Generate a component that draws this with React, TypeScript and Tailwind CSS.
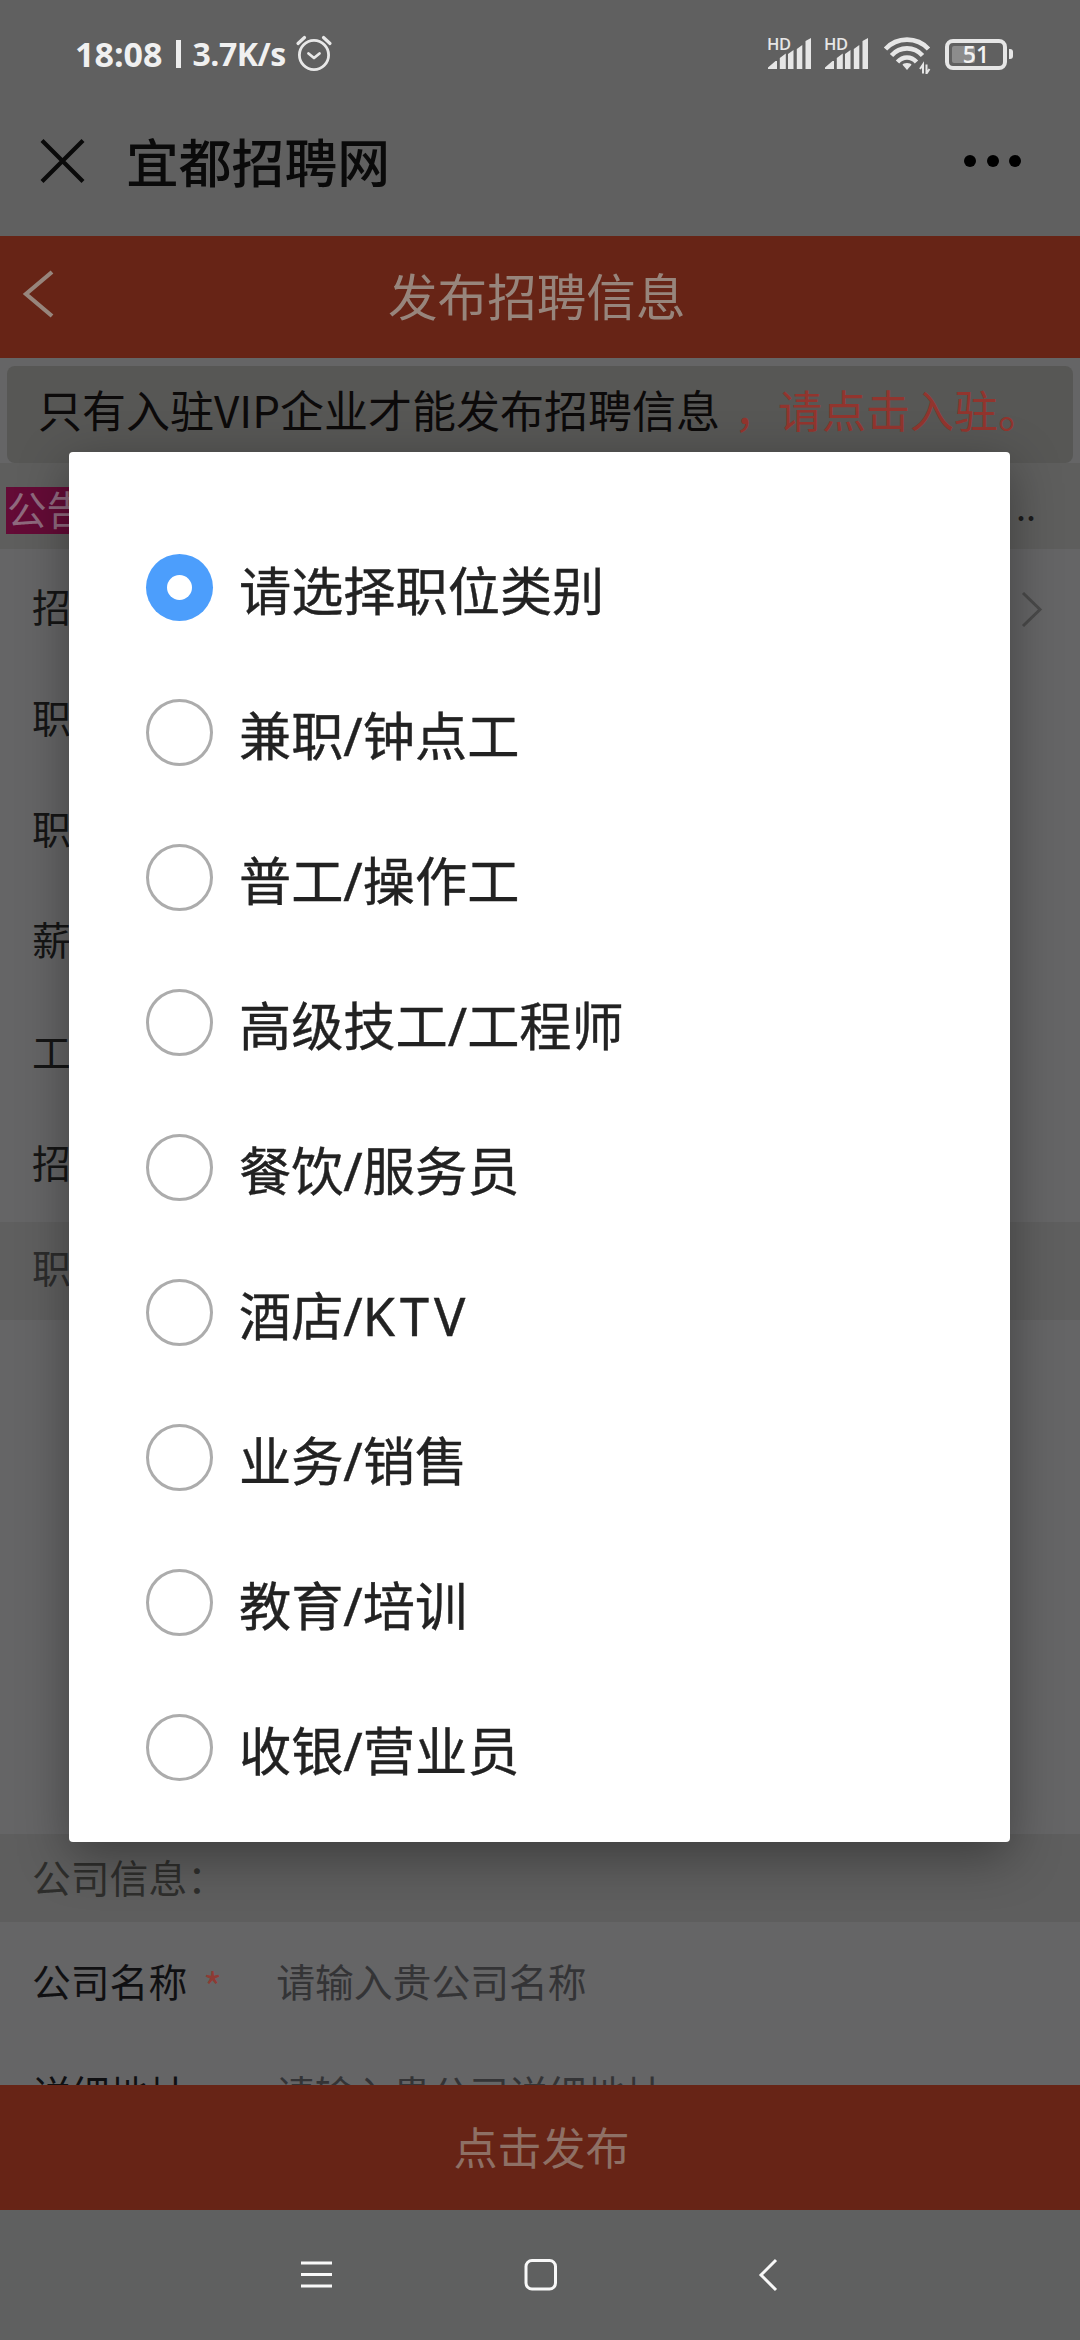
import React from "react";

const options = [
  "请选择职位类别",
  "兼职/钟点工",
  "普工/操作工",
  "高级技工/工程师",
  "餐饮/服务员",
  "酒店/KTV",
  "业务/销售",
  "教育/培训",
  "收银/营业员",
];

const formLabels = ["招", "职", "职", "薪", "工", "招"];

function AlarmIcon() {
  return (
    <svg className="h-10 w-10" viewBox="0 0 40 40" fill="none" stroke="#e8e8e8" strokeLinecap="round">
      <circle cx="20" cy="21" r="14.6" strokeWidth="2.8" />
      <path d="M14.5 19.5l5.5 4.5 5.5-4.5" strokeWidth="2.8" strokeLinejoin="round" />
      <path d="M4 9.5l6.5-6M36 9.5l-6.5-6" strokeWidth="3.2" />
    </svg>
  );
}

function SignalIcon() {
  return (
    <div className="relative h-[38px] w-[46px]">
      <svg className="h-[38px] w-[46px]" viewBox="0 0 46 38" fill="#e6e6e6">
        <path d="M1 34v-1.500l7.500-6.500h1.500V34zM12.800 34V23l6-4.500V34zM21 34V19l5.500-4V34zM29.800 34V14l5.500-4V34zM38.500 34V6l5.500-3V34z" />
      </svg>
      <span className="absolute left-0 top-[1px] text-[16.500px] font-semibold leading-[16px] tracking-[-0.3px] text-[#e6e6e6]">HD</span>
    </div>
  );
}

function WifiIcon() {
  return (
    <svg className="h-10 w-[48px]" viewBox="0 0 48 40" fill="none" stroke="#e6e6e6">
      <path d="M2.500 15C14 2.500 34 2.500 45.500 15" strokeWidth="4.600" />
      <path d="M8.500 21.500C17 12 31 12 39.500 21.500" strokeWidth="4.600" />
      <path d="M14.500 28C20 22 28 22 33.500 28" strokeWidth="4.600" />
      <path d="M24 29c2.500 0 4 .8 4.500 1.800L24 36l-4.500-5.200c.5-1 2-1.800 4.500-1.800z" fill="#e6e6e6" stroke="none" />
      <path d="M40 39.500V30.500l-3 4.500M43.500 30.500V39.500l3-4.500" strokeWidth="2" />
    </svg>
  );
}

function Battery() {
  return (
    <div className="flex items-center gap-[2px]">
      <div className="relative flex h-[31px] w-[62px] items-center justify-center rounded-[8px] border-4 border-[#e6e6e6]">
        <span className="absolute left-[3px] top-[3px] h-[17px] w-[23px] rounded-[2px] bg-[#8c8c8c]" />
        <span className="relative text-[23px] font-semibold leading-[22px] text-[#f2f2f2]">51</span>
      </div>
      <span className="h-[10px] w-1 rounded-r-[3px] bg-[#e6e6e6]" />
    </div>
  );
}

function StatusBar() {
  return (
    <div className="flex h-[108px] items-center justify-between pl-[75px] pr-[67px] font-['Open_Sans','Noto_Sans',sans-serif]">
      <div className="flex items-center font-bold text-[#f0f0f0]">
        <span className="w-[101px] text-[34px]">18:08</span>
        <span className="mr-[12px] h-[28px] w-[4.500px] bg-[#ededed]" />
        <span className="w-[101px] text-[32px] tracking-[-0.5px]">3.7K/s</span>
        <AlarmIcon />
      </div>
      <div className="flex items-center">
        <SignalIcon />
        <span className="w-[11px]" />
        <SignalIcon />
        <span className="w-[13px]" />
        <WifiIcon />
        <span className="w-[14px]" />
        <Battery />
      </div>
    </div>
  );
}

function TitleBar() {
  return (
    <div className="flex h-[128px] items-start justify-between pl-10 pr-[59px]">
      <div className="flex h-[106px] items-center">
        <svg className="h-[46px] w-[46px]" viewBox="0 0 46 46" fill="none" stroke="#0a0a0a" strokeWidth="4.200">
          <path d="M2 2.500l41 41M43 2.500L2 43.500" />
        </svg>
        <h1 className="ml-[40px] pb-[3px] text-[52.800px] font-medium leading-[60px] text-[#0a0a0a]">宜都招聘网</h1>
      </div>
      <div className="mt-[46.500px] flex gap-[10.500px]">
        <i className="h-3 w-3 rounded-full bg-black" />
        <i className="h-3 w-3 rounded-full bg-black" />
        <i className="h-3 w-3 rounded-full bg-black" />
      </div>
    </div>
  );
}

function Radio({ checked }: { checked: boolean }) {
  return checked ? (
    <span className="flex h-[67px] w-[67px] items-center justify-center rounded-full bg-[#4c9efc]">
      <i className="h-[25px] w-[25px] rounded-full bg-white" />
    </span>
  ) : (
    <span className="h-[67px] w-[67px] rounded-full border-[3px] border-[#acacac]" />
  );
}

function OptionLabel({ text }: { text: string }) {
  const parts = text.split("KTV");
  return (
    <span className="ml-[26px] pt-[7px] font-['Noto_Sans','Noto_Sans_CJK_SC',sans-serif] text-[52.200px] leading-[60px] text-[#222] [-webkit-text-stroke:0.4px_#222]">
      {parts[0]}
      {parts.length > 1 && <span className="tracking-[5px]">KTV</span>}
    </span>
  );
}

function Dialog() {
  return (
    <div className="absolute left-[69px] top-[452px] h-[1390px] w-[941px] overflow-hidden rounded-[4px] bg-white pl-[77px] pt-[63px] shadow-[0_14px_50px_rgba(0,0,0,0.36)]">
      {options.map((label, i) => (
        <div key={label} className="flex h-[145px] items-center">
          <Radio checked={i === 0} />
          <OptionLabel text={label} />
        </div>
      ))}
    </div>
  );
}

export default function App() {
  return (
    <div className="relative flex h-[2340px] w-[1080px] flex-col overflow-hidden whitespace-nowrap bg-[#656566] font-['Noto_Sans_CJK_SC',sans-serif]">
      <div className="bg-[#606060]">
        <StatusBar />
        <TitleBar />
      </div>

      <header className="flex h-[122px] shrink-0 items-center bg-[#672416] pb-[7px] text-[#97857c]">
        <svg className="ml-[22px] h-[50px] w-[34px]" viewBox="0 0 34 50" fill="none" stroke="currentColor" strokeWidth="4.200">
          <path d="M30 3L4 25l26 22" />
        </svg>
        <h2 className="ml-[332px] text-[49.600px] leading-[60px]">发布招聘信息</h2>
      </header>

      <div className="mx-[7px] mt-2 flex h-[97px] shrink-0 items-start rounded-[8px] bg-[#575755] pl-[31px] pt-[13px] text-[44px] leading-[60px] text-[#0c0a0a]">
        <span>只有入驻VIP企业才能发布招聘信息</span>
        <span className="ml-[14px] text-[#92352e]">，请点击入驻。</span>
      </div>

      <div className="flex h-[86px] shrink-0 items-start justify-between bg-[#5e5e5d] pl-[6px] pr-[44px] pt-6">
        <span className="flex h-[47px] items-center bg-[#640b36] pb-[6px] pl-[1px] text-[39.600px] leading-[47px] text-[#8f6a7e]">公告</span>
        <span className="pt-[8px] text-[36px] leading-[20px] text-[#1c1c1c]">..</span>
      </div>

      <div className="flex h-[673px] shrink-0 flex-col">
        {formLabels.map((label, i) => (
          <div key={i} className="flex h-[111.300px] items-center justify-between pl-8 pr-[36px] text-[38.800px] text-[#151515]">
            <span>{label}</span>
            {i === 0 && (
              <svg className="mt-[8px] h-[40px] w-6" viewBox="0 0 24 40" fill="none" stroke="#4a4a4a" strokeWidth="3">
                <path d="M3 4l17 16.500L3 37" />
              </svg>
            )}
          </div>
        ))}
      </div>
      <div className="flex h-[98px] shrink-0 items-center bg-[#5f5f5f] pb-[9px] pl-8 text-[38.800px] text-[#2c2c2c]">职</div>

      <div className="h-[514px] shrink-0" />

      <div className="flex h-[88px] shrink-0 items-center bg-[#5e5e5e] pb-[3px] pl-8 text-[38.800px] text-[#2e2e2c]">公司信息：</div>
      <div className="flex h-[112px] shrink-0 items-center pl-8 pt-[4px] text-[38.800px]">
        <span className="text-[#101012]">公司名称</span>
        <span className="ml-[16px] w-[73px] pt-3 text-[40px] text-[#8e3b34]">*</span>
        <span className="text-[#343436]">请输入贵公司名称</span>
      </div>
      <div className="flex h-[51px] shrink-0 items-start overflow-hidden pl-8 pt-[35px] text-[38.800px] leading-[46px]">
        <span className="w-[244px] text-[#101012]">详细地址</span>
        <span className="text-[#343436]">请输入贵公司详细地址</span>
      </div>

      <footer className="flex h-[125px] shrink-0 items-center justify-center bg-[#672416] pb-[4px] pl-[3px] text-[44px] text-[#8e7065]">
        <span>点击发布</span>
      </footer>

      <nav className="flex h-[130px] shrink-0 items-start bg-[#5f6060] pt-[47px]">
        <svg className="ml-[300px] h-[34px] w-[33px]" viewBox="0 0 33 34" stroke="#f8f8f8" strokeWidth="3">
          <path d="M1 6h31M1 17.500h31M1 29h31" />
        </svg>
        <svg className="ml-[190px] h-[36px] w-[36px]" viewBox="0 0 36 36" fill="none" stroke="#f8f8f8" strokeWidth="3">
          <rect x="3" y="3.500" width="29.500" height="28.500" rx="6" />
        </svg>
        <svg className="ml-[198px] h-[36px] w-[24px]" viewBox="0 0 24 36" fill="none" stroke="#f8f8f8" strokeWidth="3">
          <path d="M19 3L4 18 19 33" />
        </svg>
      </nav>

      <Dialog />
    </div>
  );
}
